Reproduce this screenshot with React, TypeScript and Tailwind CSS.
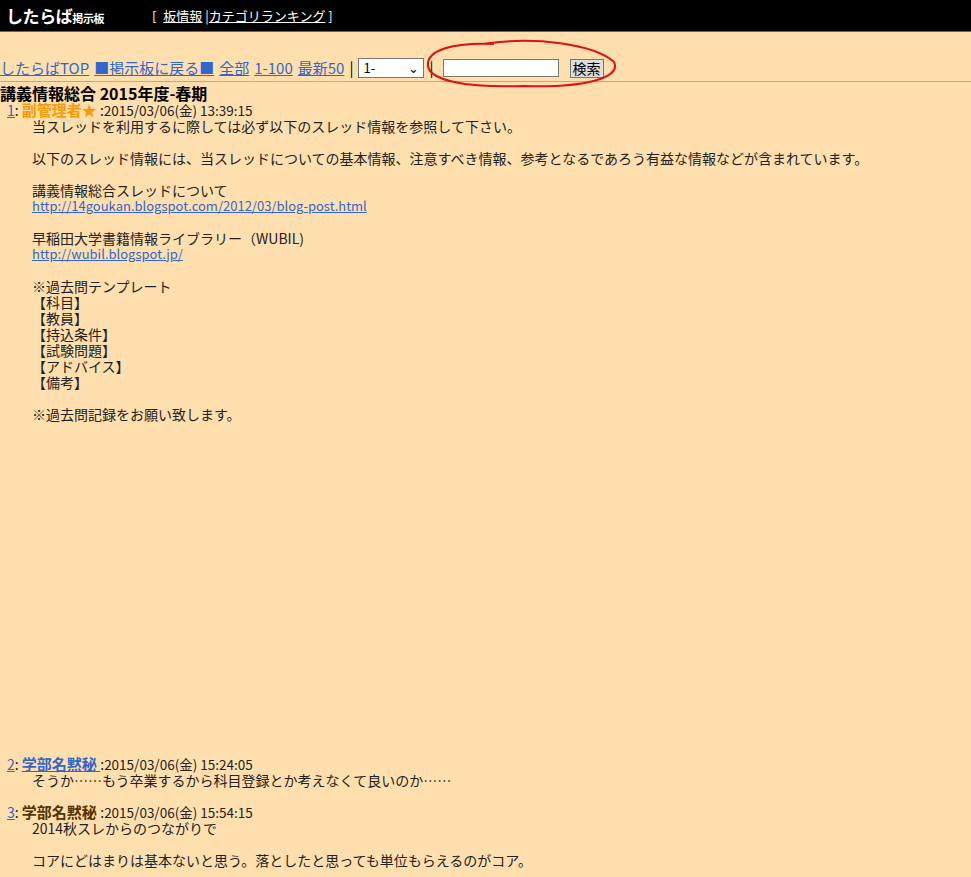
export default function App() {
  const f = { fontFamily: '"Noto Sans CJK JP", "Liberation Sans", sans-serif' };
  const body1 = [
    "当スレッドを利用するに際しては必ず以下のスレッド情報を参照して下さい。",
    "",
    "以下のスレッド情報には、当スレッドについての基本情報、注意すべき情報、参考となるであろう有益な情報などが含まれています。",
    "",
    "講義情報総合スレッドについて",
    "@http://14goukan.blogspot.com/2012/03/blog-post.html",
    "",
    "早稲田大学書籍情報ライブラリー（WUBIL)",
    "@http://wubil.blogspot.jp/",
    "",
    "※過去問テンプレート",
    "【科目】",
    "【教員】",
    "【持込条件】",
    "【試験問題】",
    "【アドバイス】",
    "【備考】",
    "",
    "※過去問記録をお願い致します。",
  ];
  const Line = ({ t }: { t: string }) =>
    t === "" ? <div className="h-[16px]" /> : t.startsWith("@") ? (
      <div className="h-[16px] leading-[16px] text-[13px]"><a className="text-[#3366cc] underline">{t.slice(1)}</a></div>
    ) : <div className="h-[16px] leading-[16px]">{t}</div>;
  return (
    <div className="min-h-[877px] bg-[#ffdfae] text-[#222] text-[14px] relative" style={f}>
      <div className="h-[32px] bg-black flex items-center text-white text-[13px] border-b border-[#666]">
        <div className="w-[152px] pl-[6px] font-bold text-[17px] tracking-tight">したらば<span className="text-[11px]">掲示板</span></div>
        <span>[ <a className="underline ml-1">板情報</a> |<a className="underline">カテゴリランキング</a> ]</span>
      </div>
      <div className="h-[50px] border-b border-[#aaa] flex items-end pb-[3px] gap-[5px] text-[#3366cc] text-[15px] leading-[20px]">
        <a className="underline">したらばTOP</a>
        <a className="underline">■掲示板に戻る■</a>
        <a className="underline">全部</a>
        <a className="underline">1-100</a>
        <a className="underline">最新50</a>
        <span className="text-black">|</span>
        <div className="w-[66px] h-[20px] bg-white border border-[#777] text-black text-[13px] flex items-center justify-between px-1">1- <span>⌄</span></div>
        <span className="text-black">|</span>
        <div className="w-[116px] h-[18px] bg-white border border-[#777] ml-1 mb-[1px]" />
        <div className="h-[19px] px-[2px] bg-[#ddd] border border-[#777] text-black text-[14px] leading-[17px] ml-[6px]">検索</div>
      </div>
      <svg className="absolute left-[424px] top-[38px]" width="196" height="58">
        <path d="M60 6 C110 -2 170 6 190 24 C198 40 160 50 100 48 C40 50 6 42 4 28 C2 12 30 4 70 6" fill="none" stroke="#e01010" strokeWidth="2" />
      </svg>
      <div className="text-[16px] font-bold text-black leading-[18px] h-[18px] mt-[2px]">講義情報総合 2015年度-春期</div>
      <div className="pl-[7px]">
        <div className="leading-[16px] h-[16px]"><a className="text-[#3366cc] underline">1</a>: <b className="text-[#ff9900] text-[15px]">副管理者★</b> :<span className="text-[13.5px]">2015/03/06(金) 13:39:15</span></div>
        <div className="pl-[25px]">{body1.map((t, i) => <Line key={i} t={t} />)}</div>
      </div>
      <div className="pl-[7px] mt-[334px]">
        <div className="leading-[16px] h-[16px]"><a className="text-[#3366cc] underline">2</a>: <a className="text-[#3366cc] underline font-bold text-[15px]">学部名黙秘 </a>:<span className="text-[13.5px]">2015/03/06(金) 15:24:05</span></div>
        <div className="pl-[25px] leading-[16px] h-[16px]">そうか……もう卒業するから科目登録とか考えなくて良いのか……</div>
        <div className="h-[16px]" />
        <div className="leading-[16px] h-[16px]"><a className="text-[#3366cc] underline">3</a>: <b className="text-[#553300] text-[15px]">学部名黙秘 </b>:<span className="text-[13.5px]">2015/03/06(金) 15:54:15</span></div>
        <div className="pl-[25px]">
          <Line t="2014秋スレからのつながりで" />
          <Line t="" />
          <Line t="コアにどはまりは基本ないと思う。落としたと思っても単位もらえるのがコア。" />
        </div>
      </div>
    </div>
  );
}
